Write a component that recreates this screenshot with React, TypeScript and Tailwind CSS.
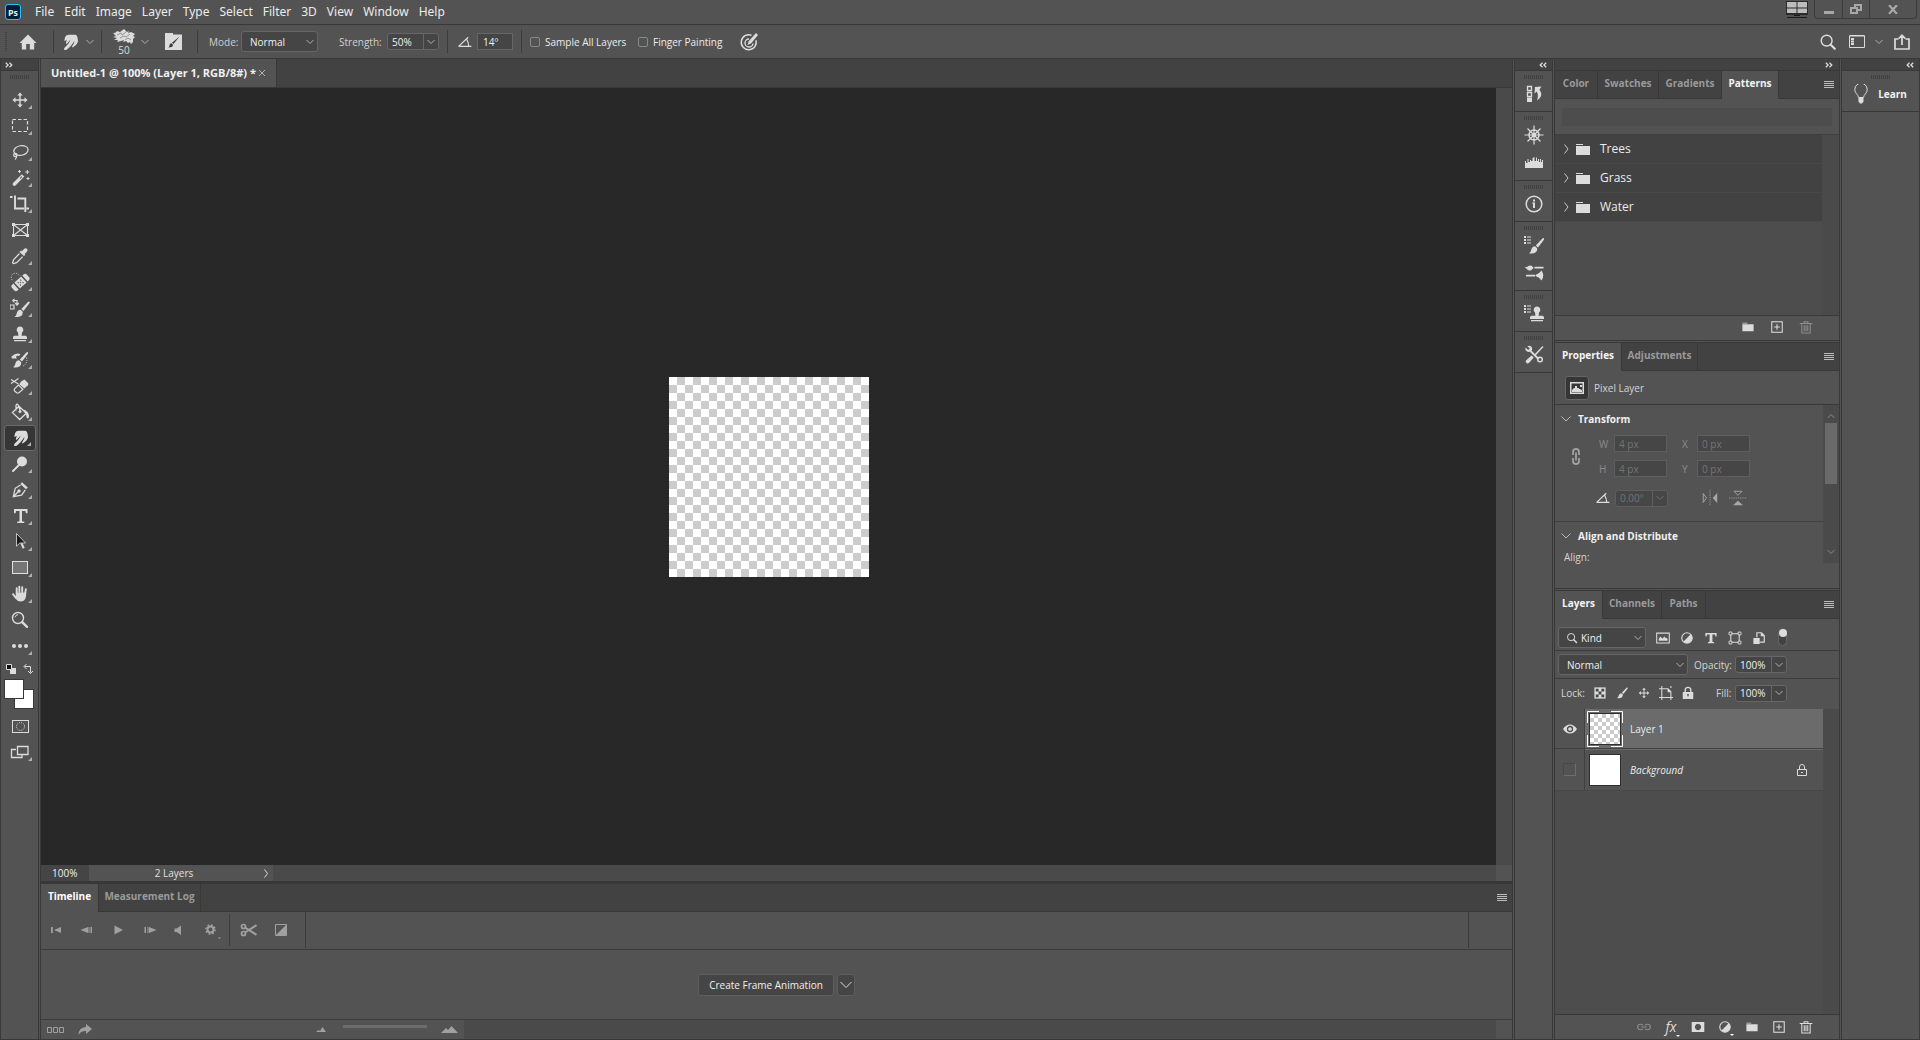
import type { ReactNode } from "react";

type Drawing = { children: ReactNode; size?: string; className?: string };

/* 20x20 drawing with a light fill, the base of most icons */
function Glyph({ children, size = "size-5", className = "text-[#dcdcdc]" }: Drawing) {
  return (
    <svg viewBox="0 0 20 20" className={`${size} shrink-0 ${className}`} fill="currentColor" stroke="none" aria-hidden="true">
      {children}
    </svg>
  );
}

function Chevron({ className = "text-[#b0b0b0]" }: { className?: string }) {
  return (
    <svg viewBox="0 0 8 6" className={`h-1.5 w-2 shrink-0 ${className}`} fill="none" stroke="currentColor" aria-hidden="true">
      <path d="M.5 1 4 4.5 7.5 1" />
    </svg>
  );
}

function Grip() {
  return (
    <svg viewBox="0 0 20 4" className="h-1 w-5 shrink-0" stroke="#404040" strokeDasharray="1 1" aria-hidden="true">
      <path d="M0 2h20" strokeWidth="4" />
    </svg>
  );
}

function DoubleArrow({ left = false }: { left?: boolean }) {
  return (
    <svg viewBox="0 0 8 6" className="h-1.5 w-2 shrink-0" fill="none" stroke="#dcdcdc" strokeWidth="1.3" aria-hidden="true">
      {left ? <path d="M3.5.7 1.2 3l2.3 2.3M7.2.7 4.9 3l2.3 2.3" /> : <path d="M.8.7 3.1 3 .8 5.3M4.5.7 6.8 3 4.5 5.3" />}
    </svg>
  );
}

function MenuLines() {
  return (
    <button aria-label="Panel menu" className="flex">
      <svg viewBox="0 0 10 7" className="h-[7px] w-2.5" stroke="#bdbdbd" aria-hidden="true">
        <path d="M0 .5h10M0 2.5h10M0 4.5h10M0 6.5h10" />
      </svg>
    </button>
  );
}

const smudge = (
  <path d="M4.3 9 5 5.200Q6 2.800 9 2.800h6.500q1.800.4 2 2.700l.5 3.500q-.3 2.500-2 4l-3 2.300q-1.300.4-.8-1l1.900-3.200.2-2.300-1.200 2.300-2.800 3.400L7 17.500q-2 1.200-2.900 0-.5-1.100.9-2.300l3.400-3.500L10.800 7.500 9.500 8.700 7.200 11.400q-1.200.8-1.400-.5l1-2.900z" />
);
const folder = <path d="M2 4h7v1H2zM2 6h16v10H2z" />;
const brush = (
  <path d="M17.8 2.2q.8.6.1 1.6L12 11.5 9.8 9.6l6.6-7.200q.7-.7 1.400-.2zM9 10.300l2.200 2q.3 2.900-1.700 4.300-2.700 1.600-6.500.7 1.900-1 2.200-3.200.7-3.500 3.800-3.800z" />
);
const stamp = (
  <path d="M10 2.5a3.4 3.4 0 0 1 2 6.1l-.4 3.2h4.2l1.200 1.200v2H3v-2l1.200-1.200h4.200L8 8.600a3.4 3.4 0 0 1 2-6.100zM4 16h12v1.300H4z" />
);
const halfDisc = (
  <>
    <circle cx="10" cy="10" r="7.5" fill="none" stroke="currentColor" strokeWidth="1.6" />
    <path d="M4.7 15.300 15.300 4.700a7.500 7.500 0 0 1-10.600 10.600z" />
  </>
);
const move = (
  <path d="M10 2.5 7.300 5.500h2v3.800H5.500v-2L2.500 10l3 2.700v-2h3.800v3.800h-2l2.700 3 2.700-3h-2v-3.800h3.800v2l3-2.700-3-2.700v2h-3.800V5.500h2z" />
);
const plusBox = (
  <>
    <rect x="2.5" y="2.5" width="15" height="15" fill="none" stroke="currentColor" strokeWidth="1.5" />
    <path d="M9.2 6h1.6v3.200H14v1.600h-3.200V14H9.200v-3.200H6V9.200h3.200z" />
  </>
);
const trash = (
  <path
    d="M1 5h18M7.3 5V2.500h5.400V5M4 5v13.500h12V5M7.500 7.500v8.500M10 7.500v8.500M12.500 7.500v8.500"
    fill="none"
    stroke="currentColor"
    strokeWidth="1.5"
  />
);
const magnifier = (
  <g fill="none" stroke="currentColor">
    <circle cx="8.5" cy="8.5" r="6" strokeWidth="1.6" />
    <path d="m13 13 4.500 4.500" strokeWidth="2.5" strokeLinecap="round" />
  </g>
);
const angle = (
  <path d="M2 15.500 14 4M2 15.500h16M12 6.200q2.400 4.300 2.700 9.300" fill="none" stroke="currentColor" strokeWidth="1.5" />
);

const tools: { name: string; icon: ReactNode; plain?: boolean }[] = [
  { name: "Move", icon: move },
  {
    name: "Rectangular Marquee",
    icon: <rect x="2.5" y="3.5" width="15" height="12" fill="none" stroke="currentColor" strokeWidth="1.2" strokeDasharray="3.5 2" />,
  },
  {
    name: "Lasso",
    icon: (
      <g fill="none" stroke="currentColor" strokeWidth="1.2">
        <ellipse cx="11" cy="8.5" rx="7.2" ry="4.8" transform="rotate(-10 11 8.500)" />
        <circle cx="5.3" cy="13" r="1.7" />
        <path d="M4 11.500q2 .5 2.700 2.200-.2 2.500-1.700 4" />
      </g>
    ),
  },
  {
    name: "Magic Wand",
    icon: (
      <>
        <path d="m11.800 6.200 2.500 2.300L5.500 17.600q-1.300.8-2.500-.3-.9-1.200 0-2.400zm-.2 2-1.800 1.900.8.700 1.700-1.900z" fillRule="evenodd" />
        <path d="M9.500 2v3M8 3.500h3M17.300 2v4M15.300 4h4M18 9v3M16.500 10.500h3" fill="none" stroke="currentColor" />
      </>
    ),
  },
  {
    name: "Crop",
    icon: <path d="M0 3h2.500M5 1.500v13h9M7.500 4.500h7.800V18M16.500 14.500h2.500" fill="none" stroke="currentColor" strokeWidth="1.9" />,
  },
  {
    name: "Frame",
    plain: true,
    icon: (
      <>
        <path d="M3.500 4.500h14v11h-14zM3.500 4.500l14 11M17.500 4.500l-14 11" fill="none" stroke="currentColor" strokeWidth="1.1" />
        <path d="M2 3h3v3H2zM16 3h3v3h-3zM2 14h3v3H2zM16 14h3v3h-3z" />
      </>
    ),
  },
  {
    name: "Eyedropper",
    icon: (
      <>
        <path d="M17 2.700q1.300 1.500-.2 3L14.700 8l.7.800-1.500 1.300-4.400-4.200L11 4.500l.9.700 2.100-2.300q1.600-1.400 3-.2z" />
        <path d="M9.500 7.500 3.700 13.500 2.600 16.800l.8.800 3.300-1 5.900-6" fill="none" stroke="currentColor" strokeWidth="1.3" />
      </>
    ),
  },
  {
    name: "Spot Healing Brush",
    icon: (
      <>
        <path d="M9 3.300a4 4 0 0 0-7.200 4q.3 1.200 1.400 2" fill="none" stroke="currentColor" strokeDasharray="1 1.5" />
        <g transform="rotate(-42 10.500 10.500)">
          <path d="M4.500 6.500v8H2.800q-2.300-.2-2.300-2.500V9q0-2.300 2.300-2.500zM16.500 6.500h1.700q2.300.2 2.300 2.500v3q0 2.300-2.300 2.500h-1.700zM5.500 6.500h10v8h-10z" />
          <path d="M8.700 8.200v1.500M12.300 8.200v1.500M10.500 9.800v1.500M8.700 11.500v1.500M12.300 11.500v1.500M5.500 6v9M15.500 6v9" stroke="#535353" />
        </g>
      </>
    ),
  },
  {
    name: "Color Replacement",
    icon: (
      <>
        <g transform="translate(1.500 1.500)">{brush}</g>
        <path d="M0 7h4v4H0zM3 2.500h4v4M4.500.8 2.800 2.500l1.700 1.800M5.200 5 7 7l1.800-2" fill="none" stroke="currentColor" strokeWidth="1.2" />
      </>
    ),
  },
  { name: "Clone Stamp", icon: stamp },
  {
    name: "History Brush",
    icon: (
      <>
        {brush}
        <path d="M1.500 6.500q5-4.500 9-2.200L9 6Q6.500 5.300 6 7l1 1.500H1.800z" />
        <path d="M16.500 7.500q1.500 6-3.500 8.500" fill="none" stroke="currentColor" strokeDasharray="1 1.3" />
      </>
    ),
  },
  {
    name: "Background Eraser",
    icon: (
      <>
        <path d="m11.500 5.300 3-1.800 3.700 3.700q.5 1.200-.3 2l-3.500 3.200-5.200-4.200z" />
        <path d="M8.500 9 4.500 12.800q-.8 1.100.2 2.200l2 1.800q1.100.7 2.200 0l4-3.500z" fill="none" stroke="currentColor" strokeWidth="1.2" />
        <path d="M1 3.500 8.500 8M1 7.500 8.500 2.500" fill="none" stroke="currentColor" strokeWidth="1.2" />
      </>
    ),
  },
  {
    name: "Paint Bucket",
    icon: (
      <>
        <path d="m9 4.200 7.300 7-6.600 6.300-7.200-6.900zM6 8.500V3.200q1-2 2.200 0l2 5.300" fill="none" stroke="currentColor" strokeWidth="1.3" />
        <circle cx="10" cy="9.5" r="1.5" />
        <path d="M13.500 7.500q5.200 1.700 5.500 6.500.2 2.300-1.200 2.600-1.800-.1-1.300-2.500z" />
      </>
    ),
  },
  { name: "Smudge", icon: smudge },
  {
    name: "Dodge",
    icon: (
      <>
        <circle cx="12" cy="7.5" r="5" />
        <path d="m9 11-6 6" stroke="currentColor" strokeWidth="2" strokeLinecap="round" />
      </>
    ),
  },
  {
    name: "Pen",
    icon: (
      <>
        <path d="m12 2.200 5.800 5.300-1.800 1.800-5.700-5.300z" />
        <path d="M10.500 5 5.200 8.300 3.300 16.600l8.300-1.500 3.700-5.200M3.500 16.500l4.700-4.700" fill="none" stroke="currentColor" strokeWidth="1.3" />
        <circle cx="9" cy="11" r="1.7" />
      </>
    ),
  },
  { name: "Type", icon: <path d="M4 3h13.500v4.300H16L15.300 5H12v10.200l2.300.5V17H7.200v-1.300l2.300-.5V5H6.200l-.7 2.300H4z" /> },
  {
    name: "Path Selection",
    icon: (
      <>
        <path d="m10.500 11.500 2.200 5.200 2-1-2.400-5z" fill="#dcdcdc" />
        <path d="M6.500 1.500v12.700l3.300-3.200h5.700z" fill="#1a1a1a" stroke="#cfcfcf" strokeWidth=".9" />
      </>
    ),
  },
  { name: "Rectangle", icon: <rect x="2.5" y="3.5" width="15" height="12" fill="#767676" stroke="#e0e0e0" /> },
  {
    name: "Hand",
    icon: (
      <>
        <path d="M6.700 9V4.300M9.300 8V2.600M12.200 8V3.300M15.200 9.500l.6-4.200M3 10.200l3.200 4" stroke="currentColor" strokeWidth="1.9" strokeLinecap="round" />
        <path d="M5.800 8.500h10.300q.4 3.500-.7 6-1.300 3-4.700 3-3.200 0-4.700-2.500l-2-3.200 1.800.3z" />
      </>
    ),
  },
  {
    name: "Zoom",
    plain: true,
    icon: (
      <>
        <circle cx="8" cy="8" r="5.5" fill="none" stroke="currentColor" strokeWidth="1.4" />
        <path d="M5 7.200A3.300 3.300 0 0 1 8 4.700" fill="none" stroke="currentColor" />
        <path d="m12.200 12.200 4.800 4.600" stroke="currentColor" strokeWidth="2.4" strokeLinecap="round" />
      </>
    ),
  },
  {
    name: "Edit Toolbar",
    icon: (
      <>
        <circle cx="4" cy="10" r="2" />
        <circle cx="10" cy="10" r="2" />
        <circle cx="16" cy="10" r="2" />
      </>
    ),
  },
];

function CornerMark() {
  return (
    <svg viewBox="0 0 4 4" className="absolute right-1 bottom-1 size-1" fill="#b0b0b0" aria-hidden="true">
      <path d="M4 0v4H0z" />
    </svg>
  );
}

function Toolbox() {
  return (
    <aside className="flex w-[39px] shrink-0 flex-col border-x border-[#383838]">
      <div className="flex h-3 shrink-0 items-center border-b border-[#383838] bg-[#424242] pl-1">
        <DoubleArrow />
      </div>
      <div className="flex h-4 shrink-0 justify-center pt-1">
        <Grip />
      </div>
      <div className="flex flex-col items-center">
        {tools.map((t) => (
          <button
            key={t.name}
            aria-label={t.name}
            className={
              t.name === "Smudge"
                ? "relative flex h-[26px] w-8 items-center justify-center rounded-[3px] border border-[#6a6a6a] bg-[#363636]"
                : "relative flex h-[26px] w-8 items-center justify-center"
            }
          >
            <Glyph>{t.icon}</Glyph>
            {!t.plain && <CornerMark />}
          </button>
        ))}
      </div>
      <div className="mt-1 flex justify-between px-1">
        <button aria-label="Default colors">
          <svg viewBox="0 0 12 12" className="size-3" aria-hidden="true">
            <path d="M5 5h6v6H5z" fill="#dcdcdc" />
            <path d="M1.500 1.500h5v5h-5z" fill="#111" stroke="#dcdcdc" />
          </svg>
        </button>
        <button aria-label="Swap colors">
          <svg viewBox="0 0 12 12" className="size-3" fill="none" stroke="#dcdcdc" aria-hidden="true">
            <path d="M2.500 3.500h6v6M4.500 1 2 3.500 4.500 6M6 8l2.500 2.500L11 8" />
          </svg>
        </button>
      </div>
      <div className="relative mt-1 ml-[3px] h-[30px] w-[30px] shrink-0">
        <button aria-label="Background color" className="absolute right-0 bottom-0 size-5 border border-[#383838] bg-white" />
        <button aria-label="Foreground color" className="absolute top-0 left-0 size-5 border border-[#383838] bg-white" />
      </div>
      <div className="mt-1 flex flex-col items-center">
        <button aria-label="Quick mask" className="flex h-[26px] items-center">
          <Glyph>
            <rect x="2.5" y="4.5" width="16" height="12" fill="none" stroke="currentColor" />
            <circle cx="10.5" cy="10.5" r="4" fill="none" stroke="currentColor" strokeDasharray="1 1.1" />
          </Glyph>
        </button>
        <button aria-label="Screen mode" className="relative flex h-[26px] w-8 items-center justify-center">
          <Glyph>
            <path d="M6 7.500H1.500v8h10.500v-3M7.500 4.500h10.500v8H7.500z" fill="none" stroke="currentColor" strokeWidth="1.3" />
          </Glyph>
          <CornerMark />
        </button>
      </div>
    </aside>
  );
}

const menus = ["File", "Edit", "Image", "Layer", "Type", "Select", "Filter", "3D", "View", "Window", "Help"];

function MenuBar() {
  return (
    <header className="flex h-[25px] shrink-0 items-center border-b border-[#383838] pl-[5px]">
      <div className="mr-[9px] flex size-4 items-center justify-center rounded-[3px] border border-[#26c0ff] bg-[#001e36] text-[9px] leading-none font-bold text-[#dff0ff]">
        Ps
      </div>
      <nav className="flex flex-1 font-['Noto_Sans',sans-serif] text-[12px] leading-4 text-[#ececec]">
        {menus.map((m) => (
          <button key={m} className="px-[5px]">
            {m}
          </button>
        ))}
      </nav>
      <svg viewBox="0 0 22 18" className="mr-1.5 h-[18px] w-[22px] self-start" aria-hidden="true">
        <path d="M0 1h22v14H0z" fill="#2a2a2a" />
        <path d="M1 2h9.500v5.500H1zM11.500 2H21v5.500h-9.500zM1 8.500h9.500V13H1zM11.500 8.500H21V13h-9.500z" fill="#bcbcbc" />
        <path d="M8 15h6v1H8zM1 17h20v1H1z" fill="#1a1a1a" />
      </svg>
      <div className="mr-[3px] flex h-[19px] self-start rounded-b border-x border-b border-[#3c3c3c]">
        <button aria-label="Minimize" className="flex w-7 items-center justify-center border-r border-[#3c3c3c]">
          <span className="mt-1.5 h-[3px] w-2.5 bg-[#a8a8a8]" />
        </button>
        <button aria-label="Restore" className="flex w-[27px] items-center justify-center border-r border-[#3c3c3c]">
          <svg viewBox="0 0 12 10" className="h-2.5 w-3" fill="none" stroke="#a8a8a8" strokeWidth="2" aria-hidden="true">
            <path d="M5 4V1h6v5H8M1 4h6v5H1z" />
          </svg>
        </button>
        <button aria-label="Close" className="flex w-[46px] items-center justify-center">
          <svg viewBox="0 0 10 9" className="h-[9px] w-2.5" stroke="#a8a8a8" strokeWidth="2.2" aria-hidden="true">
            <path d="m1 0 8 9M9 0 1 9" />
          </svg>
        </button>
      </div>
    </header>
  );
}

function Sep() {
  return <div className="h-[23px] w-px shrink-0 bg-[#3c3c3c]" />;
}

/* Number box with a chevron button at its right side */
function ValueBox({ id, value }: { id: string; value: string }) {
  return (
    <div className="flex h-[17px] shrink-0 rounded-[3px] border border-[#666] bg-[#454545]">
      <input id={id} defaultValue={value} className="w-[35px] bg-transparent pl-1 leading-3 text-[#f0f0f0]" />
      <button aria-label={`${id} slider`} className="flex w-[15px] items-center justify-center border-l border-[#666]">
        <Chevron />
      </button>
    </div>
  );
}

function DropDown({ id, value, className }: { id: string; value: string; className: string }) {
  return (
    <div className={`relative flex h-[21px] shrink-0 items-center rounded-[3px] border border-[#666] bg-[#454545] ${className}`}>
      <select id={id} aria-label={id} className="h-full w-full appearance-none pl-2 text-[#f0f0f0]">
        <option>{value}</option>
      </select>
      <div className="pointer-events-none absolute right-[3px] flex">
        <Chevron />
      </div>
    </div>
  );
}

function OptionsBar() {
  return (
    <div className="flex h-[34px] shrink-0 items-center border-b border-[#383838] pl-[5px]">
      <svg viewBox="0 0 2 20" className="h-5 w-0.5 shrink-0" stroke="#404040" strokeDasharray="1 1" aria-hidden="true">
        <path d="M1 0v20" strokeWidth="2" />
      </svg>
      <button aria-label="Home" className="ml-[11px] flex">
        <Glyph>
          <path d="M10 2.500 18.500 11h-2.300v6.500h-4.400V12H8.200v5.500H3.800V11H1.500z" />
        </Glyph>
      </button>
      <div className="ml-[15px]">
        <Sep />
      </div>
      <button aria-label="Smudge tool" className="ml-1.5 flex">
        <Glyph>{smudge}</Glyph>
      </button>
      <button aria-label="Tool presets" className="mr-[7px] ml-1.5 flex">
        <Chevron />
      </button>
      <Sep />
      <button aria-label="Brush tip" className="ml-2 flex w-7 flex-col items-center leading-3 text-[#dcdcdc]">
        <svg viewBox="0 0 24 16" className="h-4 w-6" aria-hidden="true">
          <path d="M1 5q3 .5 4-2l3 1 4-3 3 3 2-1-1 2 3-1 4 2-2 2 2 1-2 2v3l-2 2-1-2-2 1-2-2-3 1 1-2-3 1-4 1 1-2-4 0 3-2-4-1 3-1z" fill="#dcdcdc" />
          <path d="m5 7 4-2 1 2 4-3M8 10l4-2 2 1 4-3M13 12l3-2 3 2" stroke="#777" fill="none" strokeWidth=".7" />
        </svg>
        50
      </button>
      <button aria-label="Brush presets" className="ml-[3px] flex">
        <Chevron />
      </button>
      <button aria-label="Brush settings" className="mr-[15px] ml-4 flex">
        <svg viewBox="0 0 17 17" className="size-[17px]" aria-hidden="true">
          <path d="M0 0h8v1.500h9V17H0z" fill="#dcdcdc" />
          <path d="M14.500 3.500 8.500 11 7 9.700zM6.300 10.200 8 11.800q.2 2.700-4.500 2.700 1-1 1-2.300.3-1.800 1.800-2z" fill="#3d3d3d" />
        </svg>
      </button>
      <Sep />
      <label htmlFor="Mode" className="ml-[11px] w-8 text-[#d0d0d0]">
        Mode:
      </label>
      <DropDown id="Mode" value="Normal" className="w-[77px]" />
      <label htmlFor="Strength" className="ml-[21px] w-12 text-[#d0d0d0]">
        Strength:
      </label>
      <ValueBox id="Strength" value="50%" />
      <div className="ml-2">
        <Sep />
      </div>
      <label htmlFor="Angle" aria-label="Angle" className="mr-1 ml-[9px]">
        <Glyph size="size-4">{angle}</Glyph>
      </label>
      <input id="Angle" defaultValue="14º" className="mr-2 h-[17px] w-9 border border-[#666] bg-[#454545] pl-[5px] text-[#f0f0f0]" />
      <Sep />
      <label className="ml-2 flex items-center gap-[5px] text-[#ececec]">
        <input type="checkbox" className="size-2.5 appearance-none rounded-[2px] border border-[#888]" />
        <span className="w-[93px]">Sample All Layers</span>
      </label>
      <label className="flex items-center gap-[5px] text-[#ececec]">
        <input type="checkbox" className="size-2.5 appearance-none rounded-[2px] border border-[#888]" />
        <span className="w-[86px]">Finger Painting</span>
      </label>
      <button aria-label="Pressure for size" className="flex">
        <Glyph>
          <path d="M12.500 3.200a7.500 7.500 0 1 0 4.500 5" fill="none" stroke="currentColor" strokeWidth="1.5" />
          <path d="M10 7a4 4 0 1 0 4 4.500" fill="none" stroke="currentColor" strokeWidth="1.4" />
          <path d="m17 1 2 2-7 8.500-3.500 1.500 1.200-3.800z" />
        </Glyph>
      </button>
      <div className="ml-auto flex items-center pr-2.5">
        <button aria-label="Search" className="flex">
          <Glyph size="size-[18px]">{magnifier}</Glyph>
        </button>
        <button aria-label="Workspace" className="ml-3 flex">
          <svg viewBox="0 0 16 13" className="h-[13px] w-4" fill="none" stroke="#dcdcdc" aria-hidden="true">
            <path d="M.5 1h15v11.500H.5zM.5.5h15" />
            <path d="M3.500 3v7" strokeWidth="3" strokeDasharray="2 .5" />
          </svg>
        </button>
        <button aria-label="Workspace list" className="ml-2.5 flex">
          <Chevron />
        </button>
        <button aria-label="Share" className="ml-[11px] flex">
          <svg viewBox="0 0 16 16" className="size-4" fill="none" stroke="#dcdcdc" aria-hidden="true">
            <path d="M4.500 5H1v10h14V5h-3.500M8 11V2M4.800 4.500 8 1.300l3.200 3.200" strokeWidth="1.7" />
          </svg>
        </button>
      </div>
    </div>
  );
}

const playback = [
  { name: "First frame", path: "M5 7h1.800v6H5zM15 7v6l-7-3z" },
  { name: "Previous frame", path: "M11 7v6l-7.500-3zM11.500 7h1v6h-1zM13.500 7H15v6h-1.500z" },
  { name: "Play", path: "M6.500 5.500v9l8.500-4.500z" },
  { name: "Next frame", path: "M5.500 7H7v6H5.500zM8.500 7h1v6h-1zM10 7v6l7.500-3z" },
  { name: "Mute", path: "M4.500 8.500h2.300L11 5.500v9.500l-4.200-3H4.500z" },
];

function Timeline() {
  return (
    <section className="flex shrink-0 flex-col border-t-[3px] border-[#383838]">
      <div className="flex h-7 bg-[#424242]">
        <button className="w-[57px] bg-[#535353] pb-1 font-bold text-white">Timeline</button>
        <button className="w-[103px] border-x border-b border-[#383838] pb-1 font-bold text-[#9a9a9a]">Measurement Log</button>
        <div className="flex flex-1 items-center justify-end border-b border-[#383838] pr-[5px]">
          <MenuLines />
        </div>
      </div>
      <div className="flex h-[38px] items-center border-b border-[#3c3c3c] pr-[43px] pb-px">
        <div className="flex w-[188px] items-center justify-between pr-2 pl-[5px]">
          {playback.map((p) => (
            <button key={p.name} aria-label={p.name} className="flex">
              <Glyph className="text-[#a0a0a0]">
                <path d={p.path} />
              </Glyph>
            </button>
          ))}
          <button aria-label="Timeline settings" className="flex">
            <Glyph className="text-[#a0a0a0]">
              <circle cx="9.5" cy="9.5" r="3" fill="none" stroke="currentColor" strokeWidth="2" />
              <circle cx="9.5" cy="9.5" r="4.6" fill="none" stroke="currentColor" strokeWidth="1.5" strokeDasharray="1.8 1.8" />
              <path d="M17 17.500h3l-1.500 1.500z" />
            </Glyph>
          </button>
        </div>
        <div className="h-8 w-px bg-[#3c3c3c]" />
        <button aria-label="Split" className="ml-[9px] flex">
          <Glyph className="text-[#a0a0a0]">
            <circle cx="4.5" cy="6.5" r="2" fill="none" stroke="currentColor" strokeWidth="1.7" />
            <circle cx="4.5" cy="13.5" r="2" fill="none" stroke="currentColor" strokeWidth="1.7" />
            <path d="m6 7.500 11.500 7.300M6 12.500l11.500-7.300" stroke="currentColor" strokeWidth="2" />
          </Glyph>
        </button>
        <button aria-label="Transition" className="ml-3 flex">
          <Glyph className="text-[#a0a0a0]">
            <path d="M4.500 4.500h11v11h-11z" fill="none" stroke="currentColor" />
            <path d="M15.500 4.500v11h-11z" />
          </Glyph>
        </button>
        <div className="ml-3.5 h-full flex-1 border-x border-[#3c3c3c]" />
      </div>
      <div className="flex h-[70px] items-center justify-center gap-[3px] border-b border-[#3c3c3c]">
        <button className="h-[22px] w-[136px] rounded-[3px] border border-[#5e5e5e] bg-[#454545] text-[#f0f0f0]">Create Frame Animation</button>
        <button aria-label="Animation type" className="flex h-[22px] w-[18px] items-center justify-center rounded-[3px] border border-[#5e5e5e] bg-[#454545]">
          <svg viewBox="0 0 12 8" className="h-2 w-3" fill="none" stroke="#dcdcdc" aria-hidden="true">
            <path d="m.5 1 5.500 5.500L11.500 1" />
          </svg>
        </button>
      </div>
      <div className="flex h-[19px] pr-4">
        <div className="flex w-[423px] items-center">
          <button aria-label="Frames" className="ml-1.5">
            <svg viewBox="0 0 18 6" className="h-1.5 w-[18px]" fill="none" stroke="#a0a0a0" aria-hidden="true">
              <path d="M.5.5h4v5h-4zM6.500.5h4v5h-4zM12.500.5h4v5h-4z" />
            </svg>
          </button>
          <button aria-label="Render video" className="ml-[13px]">
            <svg viewBox="0 0 14 11" className="h-[11px] w-3.5" fill="#a0a0a0" aria-hidden="true">
              <path d="M8 0l6 5-6 5V7Q3 6.500.5 11 .5 3.500 8 3z" />
            </svg>
          </button>
          <svg viewBox="0 0 10 5" className="ml-auto h-[5px] w-2.5" fill="#a0a0a0" aria-hidden="true">
            <path d="m0 5 2.500-2L4 4l2.500-4L10 5z" />
          </svg>
          <input
            type="range"
            aria-label="Timeline zoom"
            className="mr-3.5 mb-[7px] ml-[17px] h-[3px] w-[84px] appearance-none bg-[#6c6c6c] [&::-webkit-slider-thumb]:appearance-none"
          />
          <svg viewBox="0 0 17 7" className="mr-1.5 h-[7px] w-[17px]" fill="#a0a0a0" aria-hidden="true">
            <path d="m0 7 5-5 2 2 3.500-4L17 7z" />
          </svg>
        </div>
        <div className="flex-1 bg-[#4a4a4a]" />
      </div>
    </section>
  );
}

function Workspace() {
  return (
    <main className="ml-px flex min-w-0 flex-1 flex-col border-x border-[#383838]">
      <div className="flex h-[29px] shrink-0 border-b border-[#383838] bg-[#424242]">
        <div className="flex w-[236px] items-center border-r border-[#383838] bg-[#535353] pl-2.5">
          <button className="w-[206px] text-left text-[11px] font-bold whitespace-nowrap text-[#f0f0f0]">
            Untitled-1 @ 100% (Layer 1, RGB/8#) *
          </button>
          <button aria-label="Close document" className="ml-0.5 flex">
            <svg viewBox="0 0 6 6" className="size-1.5" stroke="#b0b0b0" aria-hidden="true">
              <path d="m0 0 6 6M6 0 0 6" />
            </svg>
          </button>
        </div>
      </div>
      <div className="flex min-h-0 flex-1">
        <div className="flex flex-1 items-center justify-center bg-[#282828] pl-px">
          <div className="size-[200px] bg-[conic-gradient(#ccc_25%,#fff_0_50%,#ccc_0_75%,#fff_0)] bg-[length:16px_16px]" />
        </div>
        <div className="w-4 bg-[#4a4a4a]" />
      </div>
      <div className="flex h-4 shrink-0 pr-4">
        <input aria-label="Zoom level" defaultValue="100%" className="w-12 bg-[#454545] pl-[11px] text-[#f0f0f0]" />
        <div className="w-[170px] text-center leading-4 text-[#e0e0e0]">2 Layers</div>
        <button aria-label="Status options" className="w-3.5">
          <svg viewBox="0 0 4 9" className="mx-auto h-[9px] w-1" fill="none" stroke="#dcdcdc" aria-hidden="true">
            <path d="m.5.5 3 4-3 4" />
          </svg>
        </button>
        <div className="flex-1 bg-[#4a4a4a]" />
      </div>
      <Timeline />
    </main>
  );
}

const listLines = <path d="M0 1h2v2H0zM3 1.500h4v1H3zM0 4h2v2H0zM3 4.500h4v1H3zM0 7h2v2H0zM3 7.500h4v1H3z" />;

const dockGroups: { name: string; icon: ReactNode }[][] = [
  [
    {
      name: "History",
      icon: (
        <>
          <path d="M3.500 2.500h4v4h-4zM3.500 8.500h4v4h-4z" fill="none" stroke="currentColor" strokeWidth="1.3" />
          <path d="M3 13.500h5V18H3zM11 3l6.500-.5-2 3q4.500 6.500-2.500 11 1.800-5-.2-9l-2.300 2z" />
        </>
      ),
    },
  ],
  [
    {
      name: "Navigator",
      icon: (
        <g fill="none" stroke="currentColor">
          <circle cx="10" cy="10" r="5" strokeWidth="1.5" />
          <circle cx="10" cy="10" r="1.5" />
          <path d="M10 .5v19M.5 10h19M3.500 3.500l13 13M16.500 3.500l-13 13" strokeWidth="1.2" />
        </g>
      ),
    },
    {
      name: "Histogram",
      icon: <path d="M1 15V8h1v2h1.500V6h1v3H6V7h1v1h1.500V5h1V4h1v4H12V4.500h1V8h1V6h1v3h1V6h1v3h1V7h1v8z" />,
    },
  ],
  [
    {
      name: "Info",
      icon: (
        <>
          <circle cx="10" cy="10" r="7.8" fill="none" stroke="currentColor" strokeWidth="1.5" />
          <path d="M9 5.500h2v2H9zM8.300 8.500H11V14H9V9.500h-.7z" />
        </>
      ),
    },
  ],
  [
    {
      name: "Brush Settings",
      icon: (
        <>
          {listLines}
          <g transform="translate(2 1)">{brush}</g>
        </>
      ),
    },
    {
      name: "Brushes",
      icon: (
        <path d="M.5 4q2 1 3.500-.7 1.600-1.500 3.500-.5l1.800 1.400v1L7.500 7Q5.500 8 4 7 2 5.500.5 4zM10.500 3.800h9v1.800h-9zM2 11.800h9v1.800H2zM11.500 12q4-1.500 6-4.500 3.500 5 0 10-2-3.500-6-4.500z" />
      ),
    },
  ],
  [
    {
      name: "Clone Source",
      icon: (
        <>
          {listLines}
          <g transform="translate(3 0)">{stamp}</g>
        </>
      ),
    },
  ],
  [
    {
      name: "Tool Presets",
      icon: (
        <>
          <path d="M6.500 6 14.500 14" stroke="currentColor" strokeWidth="1.8" />
          <path d="M1.500 2.500 4.200 5l1.600-1.700L3.300 1.200Q6.500 0 8 2.500q.7 2.300-1 3.800-2.200 1.200-4.300 0Q.8 4.700 1.500 2.500z" />
          <circle cx="16" cy="14.5" r="2.3" fill="none" stroke="currentColor" strokeWidth="1.5" />
          <path d="m18.500 1 1 1-8.300 9-1.200-1zM7.500 10.500l2.200 2L5 18q-1.700 1-2.800-.2-1.100-1.300 0-2.600z" />
        </>
      ),
    },
  ],
];

function IconDock() {
  return (
    <aside className="ml-px flex w-[39px] shrink-0 flex-col border-x border-[#383838]">
      <div className="flex h-3 shrink-0 items-center justify-end border-b border-[#383838] bg-[#424242] pr-[5px]">
        <DoubleArrow left />
      </div>
      {dockGroups.map((group) => (
        <div key={group[0].name} className="flex flex-col items-center gap-[5px] border-b border-[#383838] pt-1 pb-[7px]">
          <Grip />
          <div className="flex flex-col gap-2">
            {group.map((g) => (
              <button key={g.name} aria-label={g.name} className="flex">
                <Glyph>{g.icon}</Glyph>
              </button>
            ))}
          </div>
        </div>
      ))}
    </aside>
  );
}

type Tab = { label: string; width: string; active?: boolean };

function TabRow({ tabs }: { tabs: Tab[] }) {
  return (
    <div className="flex h-7 shrink-0 bg-[#424242]">
      {tabs.map((t) => (
        <button
          key={t.label}
          className={`${t.width} border-r border-b border-r-[#383838] pb-[3px] font-bold ${t.active ? "border-b-[#535353] bg-[#535353] text-[#f4f4f4]" : "border-b-[#383838] text-[#9a9a9a]"}`}
        >
          {t.label}
        </button>
      ))}
      <div className="flex flex-1 items-center justify-end border-b border-[#383838] pr-[5px]">
        <MenuLines />
      </div>
    </div>
  );
}

function PatternsPanel() {
  return (
    <section className="border-b border-[#383838]">
      <TabRow
        tabs={[
          { label: "Color", width: "w-[43px]" },
          { label: "Swatches", width: "w-[61px]" },
          { label: "Gradients", width: "w-[63px]" },
          { label: "Patterns", width: "w-[57px]", active: true },
        ]}
      />
      <div className="flex h-9 items-center border-b border-[#404040] px-[7px]">
        <input aria-label="Search patterns" className="h-[18px] w-full bg-[#4d4d4d]" />
      </div>
      <div className="flex h-[180px]">
        <ul className="flex-1 bg-[#4d4d4d]">
          {["Trees", "Grass", "Water"].map((name) => (
            <li key={name} className="border-b border-[#484848] bg-[#424242]">
              <button className="flex h-7 w-full items-center pl-[9px] text-[12px] leading-4 text-[#ececec]">
                <svg viewBox="0 0 5 10" className="h-2.5 w-[5px]" fill="none" stroke="#c8c8c8" aria-hidden="true">
                  <path d="m.5.5 3.500 4.500L.5 9.500" />
                </svg>
                <svg viewBox="0 0 14 11" className="mr-2.5 ml-[7px] h-[11px] w-3.5" fill="#dcdcdc" aria-hidden="true">
                  <path d="M0 0h7v1H0zM0 2h14v9H0z" />
                </svg>
                {name}
              </button>
            </li>
          ))}
        </ul>
        <div className="w-[17px] bg-[#4a4a4a]" />
      </div>
      <div className="flex h-[25px] items-center justify-end gap-[15px] border-t border-[#383838] pr-[26px] pb-0.5">
        <button aria-label="New group" className="flex">
          <Glyph size="size-3.5">{folder}</Glyph>
        </button>
        <button aria-label="New pattern" className="flex">
          <Glyph size="size-3.5">{plusBox}</Glyph>
        </button>
        <button aria-label="Delete pattern" className="flex">
          <Glyph size="size-3.5" className="text-[#8e8e8e]">
            {trash}
          </Glyph>
        </button>
      </div>
    </section>
  );
}

function Field({ label, value }: { label: string; value: string }) {
  return (
    <div className="flex items-center">
      <label htmlFor={`field-${label}`} className="w-[15px] text-[#8c8c8c]">
        {label}
      </label>
      <input
        id={`field-${label}`}
        disabled
        defaultValue={value}
        className="h-[17px] w-[53px] border border-[#5e5e5e] bg-[#464646] pl-1 text-[#747474]"
      />
    </div>
  );
}

function SectionTitle({ children }: { children: ReactNode }) {
  return (
    <button className="flex h-[29px] items-center gap-[7px] pb-0.5 pl-1.5 font-bold text-[#f0f0f0]">
      <svg viewBox="0 0 10 6" className="h-1.5 w-2.5" fill="none" stroke="#b8b8b8" aria-hidden="true">
        <path d="M.5.5 5 5 9.500.5" />
      </svg>
      {children}
    </button>
  );
}

function PropertiesPanel() {
  return (
    <section className="mt-px border-y border-[#383838]">
      <TabRow
        tabs={[
          { label: "Properties", width: "w-[67px]", active: true },
          { label: "Adjustments", width: "w-[76px]" },
        ]}
      />
      <div className="flex h-[34px] items-center gap-[5px] border-b border-[#383838] pl-2.5 text-[#d4d4d4]">
        <div className="flex size-6 items-center justify-center rounded-[3px] border border-[#666] bg-[#363636]">
          <svg viewBox="0 0 14 12" className="h-3 w-3.5" aria-hidden="true">
            <path d="M.75.75h12.500v10.500H.75z" fill="none" stroke="#dcdcdc" strokeWidth="1.5" />
            <path d="M2 10V8l2-2h1V4h2v2h2v1h1l2 1v2zM10 3h2v2h-2z" fill="#dcdcdc" />
          </svg>
        </div>
        Pixel Layer
      </div>
      <div className="flex h-[158px]">
        <div className="flex-1">
          <div className="h-[117px] border-b border-[#404040]">
            <SectionTitle>Transform</SectionTitle>
            <div className="flex items-center pt-px pl-[11px]">
              <svg viewBox="0 0 20 20" className="mr-[13px] h-5 w-5" fill="none" stroke="#a0a0a0" strokeWidth="1.8" aria-hidden="true">
                <path d="M7 9V6a3 3 0 0 1 6 0v3M7 12v3a3 3 0 0 0 6 0v-3M10 6.500v8" />
              </svg>
              <div className="grid grid-cols-2 gap-x-[15px] gap-y-2">
                <Field label="W" value="4 px" />
                <Field label="X" value="0 px" />
                <Field label="H" value="4 px" />
                <Field label="Y" value="0 px" />
              </div>
            </div>
            <div className="mt-3 flex items-center pl-10">
              <label htmlFor="Rotation" aria-label="Rotation">
                <Glyph size="size-4">{angle}</Glyph>
              </label>
              <div className="ml-1 flex h-[17px] rounded-[3px] border border-[#5e5e5e] bg-[#464646]">
                <input id="Rotation" disabled defaultValue="0.00º" className="w-9 pl-1 text-[#747474]" />
                <button aria-label="Rotation list" className="flex w-[15px] items-center justify-center border-l border-[#5e5e5e]">
                  <Chevron className="text-[#707070]" />
                </button>
              </div>
              <button aria-label="Flip horizontal" className="ml-[33px] flex">
                <Glyph size="size-[18px]" className="text-[#a8a8a8]">
                  <path d="M2.500 5v10L6 10z" fill="none" stroke="currentColor" />
                  <path d="M10 1v18" stroke="currentColor" strokeDasharray="1 1" />
                  <path d="M18 4.500v11L13 10z" />
                </Glyph>
              </button>
              <button aria-label="Flip vertical" className="ml-2.5 flex">
                <Glyph size="size-[18px]" className="text-[#a8a8a8]">
                  <path d="M5.500 2.500h9L10 7z" fill="none" stroke="currentColor" />
                  <path d="M0 10h20" stroke="currentColor" strokeDasharray="1 1" />
                  <path d="M4.500 18h11L10 13z" />
                </Glyph>
              </button>
            </div>
          </div>
          <SectionTitle>Align and Distribute</SectionTitle>
          <div className="pl-[9px] text-[#d4d4d4]">Align:</div>
        </div>
        <div className="flex w-4 flex-col items-center justify-between bg-[#4a4a4a] pt-2 pb-2">
          <div className="flex flex-col items-center gap-1">
            <svg viewBox="0 0 8 6" className="h-1.5 w-2" fill="none" stroke="#888" aria-hidden="true">
              <path d="M.5 5 4 1.500 7.500 5" />
            </svg>
            <div className="h-[61px] w-3 bg-[#6a6a6a]" />
          </div>
          <Chevron className="text-[#888]" />
        </div>
      </div>
      <div className="h-[25px]" />
    </section>
  );
}

const filters: { name: string; icon: ReactNode }[] = [
  {
    name: "Pixel layers",
    icon: (
      <>
        <path d="M1 3h18v14H1z" fill="none" stroke="currentColor" strokeWidth="1.5" />
        <path d="M4 14v-3l2.500-3L9 11l3-3 2 2.500 1-1 1.500 2V14z" />
      </>
    ),
  },
  { name: "Adjustment layers", icon: halfDisc },
  { name: "Type layers", icon: <path d="M2 3h16v5h-1.500L15.500 5H12v10.500l2.500.5v1.500h-9V16l2.500-.5V5H4.500l-1 3H2z" /> },
  {
    name: "Shape layers",
    icon: (
      <>
        <path d="M4 4h12v12H4z" fill="none" stroke="currentColor" strokeWidth="1.5" />
        <path d="M1.500 1.500h4v4h-4zM14.500 1.500h4v4h-4zM1.500 14.500h4v4h-4zM14.500 14.500h4v4h-4z" fill="#535353" stroke="currentColor" strokeWidth="1.3" />
      </>
    ),
  },
  {
    name: "Smart objects",
    icon: (
      <>
        <path d="M7 9V2.500h6.500l4 4v9.500H11" fill="none" stroke="currentColor" strokeWidth="1.7" />
        <path d="M2 10h9v8.500H2zM12.500 2v5.500H18z" />
      </>
    ),
  },
];

const locks: { name: string; icon: ReactNode }[] = [
  {
    name: "Lock transparent pixels",
    icon: (
      <>
        <path d="M2 2h16v16H2z" />
        <path d="M4 4h4v4H4zM12 4h4v4h-4zM8 8h4v4H8zM4 12h4v4H4zM12 12h4v4h-4z" fill="#454545" />
      </>
    ),
  },
  { name: "Lock image pixels", icon: brush },
  { name: "Lock position", icon: move },
  {
    name: "Prevent nesting",
    icon: <path d="M4 0v20M4 4h9l4 4v12M0 4h4M0 16.500h20M13 4v4h4M17 0v3" fill="none" stroke="currentColor" strokeWidth="1.5" />,
  },
  {
    name: "Lock all",
    icon: (
      <>
        <path d="M6 9V6a4 4 0 0 1 8 0v3" fill="none" stroke="currentColor" strokeWidth="2" />
        <path d="M2.500 8.500h15v10h-15zm6.500 3v3h2v-3z" fillRule="evenodd" />
      </>
    ),
  },
];

function LayersPanel() {
  return (
    <section className="mt-px flex min-h-0 flex-1 flex-col border-t border-[#383838]">
      <TabRow
        tabs={[
          { label: "Layers", width: "w-12", active: true },
          { label: "Channels", width: "w-[59px]" },
          { label: "Paths", width: "w-11" },
        ]}
      />
      <div className="flex h-8 shrink-0 items-center border-b border-[#3c3c3c] pt-1.5 pl-[3px]">
        <div className="relative flex h-[21px] w-[88px] items-center rounded-[3px] border border-[#666] bg-[#454545] pl-[7px]">
          <Glyph size="size-3">{magnifier}</Glyph>
          <select aria-label="Filter kind" className="h-full flex-1 appearance-none pl-[3px] text-[#f0f0f0]">
            <option>Kind</option>
          </select>
          <div className="pointer-events-none absolute right-[3px] flex">
            <Chevron />
          </div>
        </div>
        <div className="ml-2.5 flex gap-2.5">
          {filters.map((f) => (
            <button key={f.name} aria-label={f.name} className="flex">
              <Glyph size="size-3.5">{f.icon}</Glyph>
            </button>
          ))}
        </div>
        <button aria-label="Toggle filter" className="mb-px ml-3 flex h-[18px] w-[9px] items-start justify-center rounded-full border border-[#666] bg-[#424242]">
          <span className="block size-2 shrink-0 rounded-full bg-[#dcdcdc]" />
        </button>
      </div>
      <div className="flex h-7 shrink-0 items-center border-b border-[#3c3c3c] pl-[3px] text-[#d4d4d4]">
        <DropDown id="Blend" value="Normal" className="w-[130px]" />
        <label htmlFor="Opacity" className="ml-1.5 w-[41px]">
          Opacity:
        </label>
        <ValueBox id="Opacity" value="100%" />
      </div>
      <div className="flex h-[30px] shrink-0 items-center pb-0.5 pl-1.5 text-[#d4d4d4]">
        <span className="w-8">Lock:</span>
        <div className="flex gap-2">
          {locks.map((l) => (
            <button key={l.name} aria-label={l.name} className="flex">
              <Glyph size="size-3.5">{l.icon}</Glyph>
            </button>
          ))}
        </div>
        <label htmlFor="Fill" className="ml-[21px] w-[19px]">
          Fill:
        </label>
        <ValueBox id="Fill" value="100%" />
      </div>
      <div className="flex min-h-0 flex-1">
        <ul className="flex-1 bg-[#4d4d4d]">
          <li className="flex h-10 border-b border-[#404040] bg-[#535353]">
            <button aria-label="Hide Layer 1" className="flex w-[30px] items-center justify-center border-r border-[#404040]">
              <svg viewBox="0 0 14 10" className="h-2.5 w-3.5" aria-hidden="true">
                <path d="M0 5q3-4.500 7-4.500T14 5q-3 4.500-7 4.500T0 5z" fill="#dcdcdc" />
                <circle cx="7" cy="5" r="2.5" fill="none" stroke="#4a4a4a" strokeWidth="1.3" />
              </svg>
            </button>
            <button className="flex flex-1 items-center gap-[7px] bg-[#6b6b6b] pl-0.5 text-[#ececec]">
              <span className="relative flex size-9 items-center justify-center">
                <svg viewBox="0 0 36 36" className="absolute inset-0 size-9" fill="none" stroke="#fff" aria-hidden="true">
                  <path d="M.5 12V.5H12M24 .5h11.500V12M35.500 24v11.500H24M12 35.500H.5V24" />
                </svg>
                <span className="size-8 border border-[#2e2e2e] bg-[conic-gradient(#ccc_25%,#fff_0_50%,#ccc_0_75%,#fff_0)] bg-[length:8px_8px]" />
              </span>
              Layer 1
            </button>
          </li>
          <li className="flex h-[42px] border-b border-[#484848] bg-[#535353]">
            <button aria-label="Show Background" className="flex w-[30px] items-center justify-center border-r border-[#404040]">
              <span className="size-[13px] border border-t-[#484848] border-r-[#6e6e6e] border-b-[#6e6e6e] border-l-[#484848]" />
            </button>
            <button className="flex flex-1 items-center border-t border-[#6b6b6b] pr-4 pl-1 text-[#ececec] italic">
              <span className="mr-[9px] size-8 border border-[#2e2e2e] bg-white" />
              Background
              <svg viewBox="0 0 10 12" className="ml-auto h-3 w-2.5" fill="none" stroke="#dcdcdc" aria-hidden="true">
                <path d="M.5 5.500h9v6h-9zM2.500 5.500V3a2.500 2.500 0 0 1 5 0v2.500M4 8.500h2" />
              </svg>
            </button>
          </li>
        </ul>
        <div className="w-4 bg-[#4a4a4a]" />
      </div>
      <div className="flex h-[25px] shrink-0 items-center justify-end gap-[13px] border-t border-[#383838] pr-[26px]">
        <button aria-label="Link layers" className="flex">
          <Glyph size="size-3.5" className="text-[#8e8e8e]">
            <path
              d="M8.500 12.500Q7.500 14 5 14a4 4 0 0 1 0-8q2.500 0 3.500 1.500M11.500 7.500Q12.500 6 15 6a4 4 0 0 1 0 8q-2.500 0-3.500-1.500M6 10h8"
              fill="none"
              stroke="currentColor"
              strokeWidth="1.5"
            />
          </Glyph>
        </button>
        <button aria-label="Layer style" className="relative w-3.5 text-[14px] leading-4 text-[#dcdcdc] italic">
          fx
          <DownMark />
        </button>
        <button aria-label="Add mask" className="flex">
          <Glyph size="size-3.5">
            <path d="M1 3h18v14H1zm9 2.500a4.500 4.500 0 1 0 .01 0z" fillRule="evenodd" />
          </Glyph>
        </button>
        <button aria-label="New adjustment layer" className="relative flex">
          <Glyph size="size-3.5">{halfDisc}</Glyph>
          <DownMark />
        </button>
        <button aria-label="New layer group" className="flex">
          <Glyph size="size-3.5">{folder}</Glyph>
        </button>
        <button aria-label="New layer" className="flex">
          <Glyph size="size-3.5">{plusBox}</Glyph>
        </button>
        <button aria-label="Delete layer" className="flex">
          <Glyph size="size-3.5">{trash}</Glyph>
        </button>
      </div>
    </section>
  );
}

function DownMark() {
  return (
    <svg viewBox="0 0 4 2" className="absolute -right-0.5 -bottom-0.5 h-0.5 w-1" fill="#fff" aria-hidden="true">
      <path d="M0 0h4L2 2z" />
    </svg>
  );
}

function RightPanels() {
  return (
    <aside className="ml-px flex w-[286px] shrink-0 flex-col border-x border-[#383838]">
      <div className="flex h-3 shrink-0 items-center justify-end border-b border-[#383838] bg-[#424242] pr-1.5">
        <DoubleArrow />
      </div>
      <PatternsPanel />
      <PropertiesPanel />
      <LayersPanel />
    </aside>
  );
}

function LearnDock() {
  return (
    <aside className="ml-px flex w-[79px] shrink-0 flex-col border-x border-[#383838]">
      <div className="flex h-3 shrink-0 items-center justify-end border-b border-[#383838] bg-[#424242] pr-[5px]">
        <DoubleArrow left />
      </div>
      <div className="flex h-[41px] flex-col items-center border-b border-[#383838] pt-1">
        <Grip />
        <button className="mt-[5px] flex items-center gap-2.5 font-bold text-[#f0f0f0]">
          <svg viewBox="0 0 14 20" className="h-5 w-3.5" fill="none" stroke="#dcdcdc" aria-hidden="true">
            <path d="M4.500 13.500Q4.300 11.500 2.300 9.500a6.200 6.200 0 1 1 9.400 0q-2 2-2.200 4z" />
            <path d="M4.500 14h5v3.500L8 19.500H6l-1.500-2z" fill="#dcdcdc" stroke="none" />
          </svg>
          Learn
        </button>
      </div>
    </aside>
  );
}

export default function App() {
  return (
    <div className="flex h-screen flex-col bg-[#535353] font-['Open_Sans','Noto_Sans',sans-serif] text-[10px] leading-3 select-none">
      <MenuBar />
      <OptionsBar />
      <div className="flex min-h-0 flex-1 border-b border-[#383838]">
        <Toolbox />
        <Workspace />
        <IconDock />
        <RightPanels />
        <LearnDock />
      </div>
    </div>
  );
}
